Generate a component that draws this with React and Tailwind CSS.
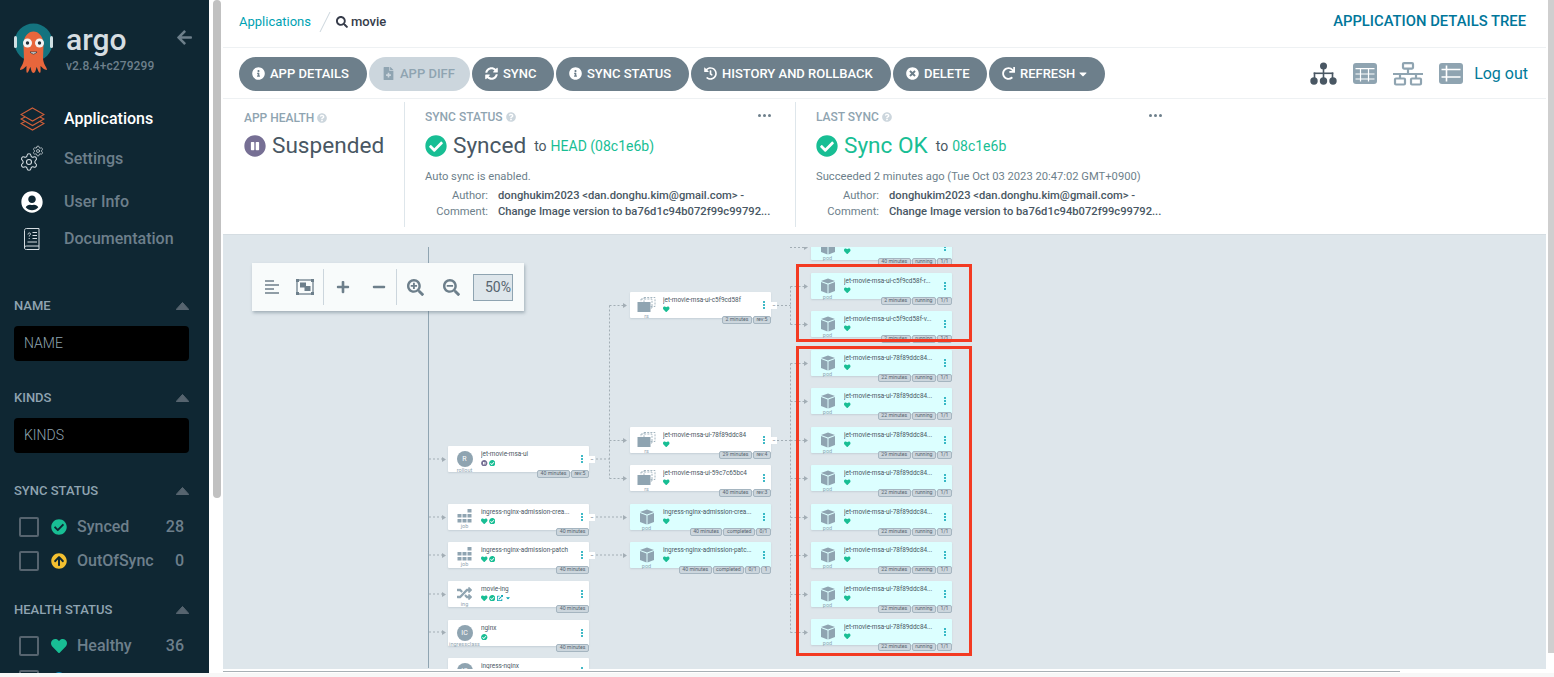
import {
  FaArrowCircleUp,
  FaArrowLeft,
  FaCaretDown,
  FaCheckCircle,
  FaExternalLinkAlt,
  FaFileMedical,
  FaHeart,
  FaHistory,
  FaInfoCircle,
  FaMinus,
  FaPauseCircle,
  FaPlus,
  FaQuestionCircle,
  FaRandom,
  FaRedo,
  FaSearch,
  FaSearchMinus,
  FaSearchPlus,
  FaSyncAlt,
  FaTimesCircle,
  FaUserCircle,
} from "react-icons/fa";
import { Settings } from "lucide-react";

const GREEN = "#18be94";

function ArgoLogo() {
  return (
    <svg width="40" height="52" viewBox="0 0 40 52">
      <circle cx="19.5" cy="19.5" r="19" fill="#14737f" />
      <rect x="0" y="13" width="3" height="12" rx="1.5" fill="#cfdfe3" />
      <rect x="36" y="13" width="3" height="12" rx="1.5" fill="#cfdfe3" />
      <path d="M9.5 22 C9.5 4 29.5 4 29.5 22 L29 36 C30 43 33 44 33 47 C30 47 28 44 26.5 43 C26.5 46 27 49 26 50 C24 49 23.5 45 22.5 44 C22 47 21 50 19.5 50 C18 50 17 47 16.5 44 C15.5 45 15 49 13 50 C12 49 12.5 46 12.5 43 C11 44 9 47 6 47 C6 44 9 43 10 36 Z" fill="#e8663c" />
      <circle cx="13.5" cy="20" r="4.5" fill="#f4f4f4" />
      <circle cx="25.5" cy="20" r="4.5" fill="#f4f4f4" />
      <circle cx="13.5" cy="20" r="1.7" fill="#22303a" />
      <circle cx="25.5" cy="20" r="1.7" fill="#22303a" />
      <path d="M16 29 Q19.5 33 23 29 Z" fill="#fff" stroke="#22303a" strokeWidth="0.7" />
    </svg>
  );
}

function LayersIcon() {
  return (
    <svg width="25" height="24" viewBox="0 0 25 24" fill="none" stroke="#d2603a" strokeWidth="1.1">
      <path d="M12.5 1 L24 7.5 L12.5 14 L1 7.5 Z" />
      <path d="M5 10 L1 12 L12.5 18.5 L24 12 L20 10" />
      <path d="M5 14.5 L1 16.5 L12.5 23 L24 16.5 L20 14.5" />
    </svg>
  );
}

function DocIcon() {
  return (
    <svg width="16" height="22" viewBox="0 0 16 22" fill="none" stroke="#d5dde2" strokeWidth="1">
      <path d="M2.5 0.5 H15 V18 H2.5 C1.2 18 0.5 18.8 0.5 20 V2.5 C0.5 1.3 1.2 0.5 2.5 0.5 Z" />
      <path d="M0.5 20 C0.5 21 1.2 21.5 2.5 21.5 H15 V18" />
      <path d="M4 6.5 C4 4.5 6.5 4.5 6.5 6 C6.5 7 5.2 7 5.2 8.5 M5.2 10 V11" />
      <path d="M8.5 4.5 H13 M8.5 7.5 H13 M8.5 10.5 H13 M3.5 14 H13" />
    </svg>
  );
}

function GearsIcon() {
  return (
    <span className="relative h-[24px] w-[24px]">
      <Settings size={20} strokeWidth={1.3} className="absolute bottom-[-1px] left-[-1px] text-[#d5dde2]" />
      <Settings size={12} strokeWidth={1.5} className="absolute right-[0px] top-[-2px] text-[#d5dde2]" />
    </span>
  );
}

function Caret() {
  return (
    <svg width="13" height="8" viewBox="0 0 13 8">
      <path d="M6.5 0.5 L12.8 7.5 H0.2 Z" fill="#56646f" stroke="#56646f" strokeLinejoin="round" />
    </svg>
  );
}

function CubeIcon({ size = 16 }) {
  return (
    <svg width={size} height={size} viewBox="0 0 16 16">
      <path d="M8 0.5 L15 3 L8 5.6 L1 3 Z" fill="#8fa4b1" />
      <path d="M1 4 L7.5 6.4 V15.5 L1 13 Z" fill="#8fa4b1" />
      <path d="M15 4 L8.5 6.4 V15.5 L15 13 Z" fill="#8fa4b1" />
    </svg>
  );
}

function RsIcon() {
  return (
    <svg width="19" height="16" viewBox="0 0 19 16">
      <rect x="7" y="0.5" width="11" height="9" fill="none" stroke="#8fa4b1" strokeWidth="0.8" strokeDasharray="2 1.2" />
      <rect x="4" y="2" width="11" height="9" fill="none" stroke="#8fa4b1" strokeWidth="0.8" strokeDasharray="2 1.2" />
      <rect x="0.5" y="5" width="13" height="10" fill="#8fa4b1" />
    </svg>
  );
}

function JobIcon() {
  return (
    <svg width="15" height="14" viewBox="0 0 15 14" fill="#8fa4b1">
      <rect x="10.5" y="0" width="4" height="3.5" />
      <rect x="0.5" y="5" width="4" height="3.5" />
      <rect x="5.5" y="5" width="4" height="3.5" />
      <rect x="10.5" y="5" width="4" height="3.5" />
      <rect x="0.5" y="10" width="4" height="3.5" />
      <rect x="5.5" y="10" width="4" height="3.5" />
      <rect x="10.5" y="10" width="4" height="3.5" />
    </svg>
  );
}

function NodeIcon({ kind, letter }) {
  if (kind === "pod") return <CubeIcon />;
  if (kind === "rs") return <RsIcon />;
  if (kind === "job") return <JobIcon />;
  if (kind === "ing") return <FaRandom className="text-[15px] text-[#8fa4b1]" />;
  return (
    <span className="flex h-4 w-4 items-center justify-center rounded-full bg-[#8fa4b1] text-[7px] text-white">
      {letter}
    </span>
  );
}

function StatusIcons({ status }) {
  return (
    <div className="flex h-[8px] items-center gap-[1px]">
      {status.includes("suspended") && <FaPauseCircle className="text-[6.5px] text-[#766f94]" />}
      {status.includes("heart") && <FaHeart className="text-[6.5px] text-[#18be94]" />}
      {status.includes("check") && <FaCheckCircle className="text-[6.5px] text-[#18be94]" />}
      {status.includes("link") && (
        <>
          <FaExternalLinkAlt className="ml-[1px] text-[6px] text-[#00a2b3]" />
          <FaCaretDown className="ml-[1px] text-[6px] text-[#00a2b3]" />
        </>
      )}
    </div>
  );
}

function Node({ x, y, kind, letter, name, status, tags, collapse, light }) {
  return (
    <div
      className={`absolute flex h-[26px] w-[141px] rounded-[1px] shadow-[0_1px_2px_rgba(100,120,135,0.2)] ${
        light ? "bg-[#dcffff]" : "bg-white"
      }`}
      style={{ left: x - 223, top: y - 247 }}
    >
      <div className="flex w-[33px] shrink-0 flex-col items-center pt-[5px]">
        <div className="flex h-[16px] items-center">
          <NodeIcon kind={kind} letter={letter} />
        </div>
        <span className="whitespace-nowrap text-[5.5px] leading-[7px] text-[#8fa4b1]">{kind === "ic" ? "ingressclass" : kind}</span>
      </div>
      <div className="w-[96px] pt-[4px]">
        <div className="truncate text-[6.4px] leading-[8px] text-[#495763]">{name}</div>
        <div className="mt-[1px]">
          <StatusIcons status={status} />
        </div>
      </div>
      <div className="flex flex-col gap-[1px] pl-[4px] pt-[9px]">
        <span className="h-[2px] w-[2px] rounded-full bg-[#00a2b3]" />
        <span className="h-[2px] w-[2px] rounded-full bg-[#00a2b3]" />
        <span className="h-[2px] w-[2px] rounded-full bg-[#00a2b3]" />
      </div>
      <div className="absolute right-[0px] top-[24px] flex gap-[1px]">
        {tags.map((t) => (
          <span
            key={t}
            className="flex h-[8px] items-center whitespace-nowrap rounded-[2px] border border-[#a5b5c0] bg-[#ccd6dd] px-[2.5px] text-[5.2px] text-[#56646f]"
          >
            {t}
          </span>
        ))}
      </div>
      {collapse && (
        <span className="absolute left-[141px] top-[10px] flex h-[7px] w-[6px] items-center justify-center bg-white text-[6px] leading-none text-[#56646f]">
          −
        </span>
      )}
    </div>
  );
}

const col3 = [
  { y: 234, name: "jet-movie-msa-ui-59c7c65bc4...", tags: ["40 minutes", "running", "1/1"] },
  { y: 273, name: "jet-movie-msa-ui-c5f9cd58f-r...", tags: ["2 minutes", "running", "1/1"] },
  { y: 311, name: "jet-movie-msa-ui-c5f9cd58f-v...", tags: ["2 minutes", "running", "1/1"] },
  { y: 350, name: "jet-movie-msa-ui-78f89ddc84...", tags: ["22 minutes", "running", "1/1"] },
  { y: 388, name: "jet-movie-msa-ui-78f89ddc84...", tags: ["22 minutes", "running", "1/1"] },
  { y: 427, name: "jet-movie-msa-ui-78f89ddc84...", tags: ["29 minutes", "running", "1/1"] },
  { y: 465, name: "jet-movie-msa-ui-78f89ddc84...", tags: ["22 minutes", "running", "1/1"] },
  { y: 504, name: "jet-movie-msa-ui-78f89ddc84...", tags: ["22 minutes", "running", "1/1"] },
  { y: 542, name: "jet-movie-msa-ui-78f89ddc84...", tags: ["22 minutes", "running", "1/1"] },
  { y: 581, name: "jet-movie-msa-ui-78f89ddc84...", tags: ["22 minutes", "running", "1/1"] },
  { y: 619, name: "jet-movie-msa-ui-78f89ddc84...", tags: ["22 minutes", "running", "1/1"] },
];

const nodes = [
  { x: 448, y: 446, kind: "rollout", letter: "R", name: "jet-movie-msa-ui", status: ["suspended", "check"], tags: ["40 minutes", "rev:5"], collapse: true },
  { x: 448, y: 504, kind: "job", name: "ingress-nginx-admission-crea...", status: ["heart", "check"], tags: ["40 minutes"], collapse: true },
  { x: 448, y: 542, kind: "job", name: "ingress-nginx-admission-patch", status: ["heart", "check"], tags: ["40 minutes"], collapse: true },
  { x: 448, y: 581, kind: "ing", name: "movie-ing", status: ["heart", "check", "link"], tags: ["40 minutes"] },
  { x: 448, y: 620, kind: "ic", letter: "IC", name: "nginx", status: ["check"], tags: ["40 minutes"] },
  { x: 448, y: 658, kind: "ic", letter: "IC", name: "ingress-nginx", status: ["check"], tags: ["40 minutes"] },
  { x: 630, y: 292, kind: "rs", name: "jet-movie-msa-ui-c5f9cd58f", status: ["heart"], tags: ["2 minutes", "rev:5"], collapse: true },
  { x: 630, y: 427, kind: "rs", name: "jet-movie-msa-ui-78f89ddc84", status: ["heart"], tags: ["29 minutes", "rev:4"], collapse: true },
  { x: 630, y: 465, kind: "rs", name: "jet-movie-msa-ui-59c7c65bc4", status: ["heart"], tags: ["40 minutes", "rev:3"] },
  { x: 630, y: 504, kind: "pod", light: true, name: "ingress-nginx-admission-crea...", status: ["heart"], tags: ["40 minutes", "completed", "0/1"] },
  { x: 630, y: 542, kind: "pod", light: true, name: "ingress-nginx-admission-patc...", status: ["heart"], tags: ["40 minutes", "completed", "0/1", "1"] },
  ...col3.map((n) => ({ ...n, x: 811, kind: "pod", light: true, status: ["heart"] })),
];

// end of each dashed edge, in page coordinates
const arrows = [
  [446, 459], [446, 517], [446, 555], [446, 594], [446, 632],
  [627, 305], [627, 440], [627, 478], [627, 517], [627, 555],
  [808, 247], [808, 286], [808, 324], [808, 363], [808, 401], [808, 440],
  [808, 478], [808, 517], [808, 555], [808, 594], [808, 632],
];

function Edges() {
  return (
    <svg className="absolute left-0 top-0" width="1323" height="421" viewBox="223 247 1323 421" fill="none">
      <path d="M428.5 247 V668" stroke="#8fa4b1" strokeWidth="1" />
      <g stroke="#a3aeb5" strokeWidth="1" strokeDasharray="2 2">
        <path d="M429 459 H442 M429 517 H442 M429 555 H442 M429 594 H442 M429 632 H442" />
        <path d="M596 459 H609.5 M609.5 305.5 V478.5 M609.5 305.5 H623 M609.5 440.5 H623 M609.5 478.5 H623" />
        <path d="M596 517 H623 M596 555 H623" />
        <path d="M777 305.5 H790.5 M790.5 286.5 V324.5 M790.5 286.5 H804 M790.5 324.5 H804" />
        <path d="M777 440.5 H790.5 M790.5 363.5 V632.5 M790.5 363.5 H804 M790.5 401.5 H804 M790.5 440.5 H804 M790.5 478.5 H804 M790.5 517.5 H804 M790.5 555.5 H804 M790.5 594.5 H804 M790.5 632.5 H804" />
        <path d="M790 247.5 H804" />
      </g>
      {arrows.map(([x, y]) => (
        <path key={`${x}-${y}`} d={`M${x - 4} ${y - 2} L${x} ${y + 0.5} L${x - 4} ${y + 3} Z`} fill="#a3aeb5" />
      ))}
    </svg>
  );
}

function NavItem({ icon, label, active, className }) {
  return (
    <div className={`flex items-center ${className}`}>
      <span className="flex w-[64px] justify-center">{icon}</span>
      <span className={`text-[16px] font-medium ${active ? "text-white" : "text-[#6d7f8b]"}`}>{label}</span>
    </div>
  );
}

function FilterTitle({ label, className }) {
  return (
    <div className={`flex h-[16px] items-center justify-between pl-[14px] pr-[20px] ${className}`}>
      <span className="text-[13px] font-medium text-[#8fa4b1]">{label}</span>
      <Caret />
    </div>
  );
}

function FilterInput({ placeholder }) {
  return (
    <div className="mx-[14px] mt-[12px] flex h-[35px] w-[175px] items-center rounded-[4px] bg-black pl-[10px] text-[14px] font-light text-[#8fa4b1]">
      {placeholder}
    </div>
  );
}

function FilterRow({ icon, label, count, className }) {
  return (
    <div className={`flex h-[20px] items-center pl-[19px] pr-[25px] ${className}`}>
      <span className="h-[20px] w-[20px] rounded-[2px] border-2 border-[#56646f]" />
      <span className="ml-[12px] flex w-[16px] justify-center text-[16px]">{icon}</span>
      <span className="ml-[10px] flex-1 text-[16px] font-medium text-[#6d7f8b]">{label}</span>
      <span className="text-[16px] font-medium text-[#6d7f8b]">{count}</span>
    </div>
  );
}

function Sidebar() {
  return (
    <aside className="h-full w-[209px] shrink-0 overflow-hidden bg-[#0f2733]">
      <div className="flex h-[98px] pl-[14px] pt-[23px]">
        <ArgoLogo />
        <div className="ml-[12px] flex-1 pt-[2px]">
          <div className="text-[30px] font-medium leading-[30px] text-[#d6dde1]">argo</div>
          <div className="mt-[4px] text-[12px] font-medium leading-[14px] tracking-[0.1px] text-[#6d7f8b]">v2.8.4+c279299</div>
        </div>
        <FaArrowLeft className="mr-[16px] mt-[6px] text-[17px] text-[#6d7f8b]" />
      </div>
      <NavItem className="mt-[9px] h-[24px]" active icon={<LayersIcon />} label="Applications" />
      <NavItem className="mt-[16px] h-[24px]" icon={<GearsIcon />} label="Settings" />
      <NavItem className="mt-[19px] h-[24px]" icon={<FaUserCircle className="text-[22px] text-white" />} label="User Info" />
      <NavItem className="mt-[13px] h-[24px]" icon={<DocIcon />} label="Documentation" />
      <FilterTitle className="mt-[47px]" label="NAME" />
      <FilterInput placeholder="NAME" />
      <FilterTitle className="mt-[29px]" label="KINDS" />
      <FilterInput placeholder="KINDS" />
      <FilterTitle className="mt-[30px]" label="SYNC STATUS" />
      <FilterRow className="mt-[18px]" icon={<FaCheckCircle className="text-[#18be94]" />} label="Synced" count="28" />
      <FilterRow className="mt-[14px]" icon={<FaArrowCircleUp className="text-[#f4c030]" />} label="OutOfSync" count="0" />
      <FilterTitle className="mt-[31px]" label="HEALTH STATUS" />
      <FilterRow className="mt-[18px]" icon={<FaHeart className="text-[#18be94]" />} label="Healthy" count="36" />
      {/* next row: only the top edge of it is in view */}
      <FilterRow className="mt-[14px]" icon={<FaPauseCircle className="text-[#0dadea]" />} />
    </aside>
  );
}

function ActionButton({ icon, label, disabled, trailing, width }) {
  return (
    <button
      className={`flex h-[34px] items-center gap-[5px] whitespace-nowrap rounded-full pl-[13px] text-[13px] font-medium ${
        disabled ? "bg-[#ccd6dd] text-[#8fa4b1]" : "bg-[#6d7f8b] text-white"
      }`}
      style={{ width }}
    >
      <span className="w-[13px] text-[13px]">{icon}</span>
      {label}
      {trailing}
    </button>
  );
}

function TreeIcon() {
  return (
    <svg width="27" height="23" viewBox="0 0 27 23" fill="#495763">
      <circle cx="13.5" cy="4" r="3.5" />
      <rect x="12.7" y="6" width="1.6" height="10" />
      <rect x="3.7" y="10.5" width="19.6" height="1.6" />
      <rect x="3.7" y="10.5" width="1.6" height="6" />
      <rect x="21.7" y="10.5" width="1.6" height="6" />
      <circle cx="4" cy="19" r="3.7" />
      <circle cx="13.5" cy="19" r="3.7" />
      <circle cx="23" cy="19" r="3.7" />
    </svg>
  );
}

function GridIcon() {
  return (
    <svg width="24" height="21" viewBox="0 0 24 21">
      <rect width="24" height="21" rx="3" fill="#8fa4b1" />
      <path d="M2.5 5.7 H21.5 M2.5 11 H21.5 M2.5 16 H21.5 M7.5 5.7 V18.5 M15.5 5.7 V18.5" stroke="#fff" strokeWidth="1.2" />
    </svg>
  );
}

function NetworkIcon() {
  return (
    <svg width="30" height="24" viewBox="0 0 30 24" fill="none" stroke="#8fa4b1" strokeWidth="2.2">
      <rect x="10" y="1.1" width="10" height="5.5" rx="1" />
      <path d="M15 7 V12 M0 12 H30 M7 12 V16 M23 12 V16" />
      <rect x="2" y="16.5" width="10" height="6" rx="1" />
      <rect x="18" y="16.5" width="10" height="6" rx="1" />
    </svg>
  );
}

function ListIcon() {
  return (
    <svg width="24" height="21" viewBox="0 0 24 21">
      <rect width="24" height="21" rx="3" fill="#8fa4b1" />
      <path d="M2.5 6.5 H21.5 M2.5 14 H21.5 M7.5 2.5 V18.5" stroke="#fff" strokeWidth="1.6" />
    </svg>
  );
}

function FitIcon() {
  return (
    <svg width="18" height="16" viewBox="0 0 18 16" fill="#6d7f8b">
      <rect x="1" y="1" width="16" height="14" fill="none" stroke="#6d7f8b" strokeWidth="1.3" />
      <rect x="0" y="0" width="3" height="3" />
      <rect x="15" y="0" width="3" height="3" />
      <rect x="0" y="13" width="3" height="3" />
      <rect x="15" y="13" width="3" height="3" />
      <rect x="4" y="3.5" width="6" height="5" />
      <rect x="8.5" y="7" width="6" height="5" />
    </svg>
  );
}

function AlignIcon() {
  return (
    <svg width="14" height="14" viewBox="0 0 14 14" stroke="#6d7f8b" strokeWidth="1.5">
      <path d="M0 1 H9 M0 5 H14 M0 9 H9 M0 13 H14" />
    </svg>
  );
}

function ZoomBar() {
  return (
    <div className="absolute left-[29px] top-[28px] z-10 flex h-[48px] w-[272px] items-center bg-[#f8fbfb] text-[#6d7f8b] shadow-[1px_2px_3px_rgba(90,110,125,0.45)]">
      <div className="flex w-[71px] items-center pl-[13px]">
        <AlignIcon />
        <span className="ml-[17px]">
          <FitIcon />
        </span>
      </div>
      <div className="flex h-[36px] w-[73px] items-center border-l border-[#ccd6dd] pl-[12px]">
        <FaPlus className="text-[14px]" />
        <FaMinus className="ml-[22px] text-[14px]" />
      </div>
      <div className="flex h-[36px] items-center border-l border-[#ccd6dd] pl-[10px]">
        <FaSearchPlus className="text-[17px]" />
        <FaSearchMinus className="ml-[19px] text-[17px]" />
      </div>
      <div className="ml-[13px] flex h-[27px] w-[40px] items-center justify-end border border-[#8fa4b1] bg-[#dee6eb] pr-[1px] text-[14px] text-[#56646f]">
        50%
      </div>
    </div>
  );
}

function Hint() {
  return <FaQuestionCircle className="ml-[3px] text-[10px] text-[#ccd6dd]" />;
}

function MetaRow({ label, value }) {
  return (
    <div className="flex h-[16px] items-center text-[11.2px]">
      <span className="w-[63px] text-right text-[#6d7f8b]">{label}</span>
      <span className="ml-[10px] whitespace-nowrap font-medium text-[#495763]">{value}</span>
    </div>
  );
}

function Dots() {
  return (
    <span className="absolute right-0 top-[5px] flex gap-[2px]">
      <i className="h-[3px] w-[3px] rounded-full bg-[#6d7f8b]" />
      <i className="h-[3px] w-[3px] rounded-full bg-[#6d7f8b]" />
      <i className="h-[3px] w-[3px] rounded-full bg-[#6d7f8b]" />
    </span>
  );
}

function Summary() {
  const author = "donghukim2023 <dan.donghu.kim@gmail.com> -";
  const comment = "Change Image version to ba76d1c94b072f99c99792...";
  return (
    <div className="flex h-[136px] border-b border-[#d5dde2] bg-white pt-[3px]">
      <div className="h-[125px] w-[182px] shrink-0 border-r border-[#dee6eb] pl-[21px] pt-[8px]">
        <div className="flex h-[16px] items-center text-[12px] font-medium text-[#8fa4b1]">APP HEALTH<Hint /></div>
        <div className="mt-[6px] flex h-[28px] items-center">
          <FaPauseCircle className="text-[22px] text-[#766f94]" />
          <span className="ml-[6px] text-[22.6px] text-[#495763]">Suspended</span>
        </div>
      </div>
      <div className="relative h-[125px] w-[391px] shrink-0 border-r border-[#dee6eb] pl-[20px] pt-[7px]">
        <div className="relative mr-[24px]">
          <div className="flex h-[16px] items-center text-[12px] font-medium text-[#8fa4b1]">SYNC STATUS<Hint /></div>
          <Dots />
        </div>
        <div className="mt-[6px] flex h-[30px] items-center">
          <FaCheckCircle className="text-[22px]" style={{ color: GREEN }} />
          <span className="ml-[6px] text-[22.6px] text-[#495763]">Synced</span>
          <span className="ml-[8px] text-[14px] text-[#495763]">to</span>
          <span className="ml-[4px] text-[14px] text-[#18be94]">HEAD (08c1e6b)</span>
        </div>
        <div className="mt-[8px] h-[16px] text-[11.2px] leading-[16px] text-[#6d7f8b]">Auto sync is enabled.</div>
        <div className="mt-[3px]">
          <MetaRow label="Author:" value={author} />
          <MetaRow label="Comment:" value={comment} />
        </div>
      </div>
      <div className="relative h-[125px] w-[366px] shrink-0 pl-[20px] pt-[7px]">
        <div className="relative">
          <div className="flex h-[16px] items-center text-[12px] font-medium text-[#8fa4b1]">LAST SYNC<Hint /></div>
          <Dots />
        </div>
        <div className="mt-[6px] flex h-[30px] items-center">
          <FaCheckCircle className="text-[22px]" style={{ color: GREEN }} />
          <span className="ml-[6px] text-[22.6px] text-[#18be94]">Sync OK</span>
          <span className="ml-[8px] text-[14px] text-[#495763]">to</span>
          <span className="ml-[4px] text-[14px] text-[#18be94]">08c1e6b</span>
        </div>
        <div className="mt-[8px] h-[16px] whitespace-nowrap text-[11.2px] leading-[16px] text-[#6d7f8b]">Succeeded 2 minutes ago (Tue Oct 03 2023 20:47:02 GMT+0900)</div>
        <div className="mt-[3px]">
          <MetaRow label="Author:" value={author} />
          <MetaRow label="Comment:" value={comment} />
        </div>
      </div>
    </div>
  );
}

function Main() {
  return (
    <main className="flex h-full min-w-0 flex-1 flex-col bg-white">
      <div className="flex h-[48px] shrink-0 items-center justify-between border-b border-[#eef1f3] pb-[4px] pl-[16px] pr-[20px]">
        <div className="flex items-center text-[13px]">
          <span className="text-[#00a2b3]">Applications</span>
          <svg className="ml-[8px]" width="12" height="22" viewBox="0 0 12 22">
            <path d="M1 21 L11 1" stroke="#ccd6dd" />
          </svg>
          <FaSearch className="ml-[5px] text-[12px] text-[#363c4a]" />
          <span className="ml-[3px] font-medium text-[#363c4a]">movie</span>
        </div>
        <span className="text-[14.8px] font-medium text-[#00769a]">APPLICATION DETAILS TREE</span>
      </div>
      <div className="flex h-[51px] shrink-0 items-center border-b border-[#eef1f3] pl-[16px] pr-[18px] pt-[1px]">
        <div className="flex flex-1 gap-[2px]">
          <ActionButton width={128} icon={<FaInfoCircle />} label="APP DETAILS" />
          <ActionButton width={101} disabled icon={<FaFileMedical />} label="APP DIFF" />
          <ActionButton width={82} icon={<FaSyncAlt />} label="SYNC" />
          <ActionButton width={133} icon={<FaInfoCircle />} label="SYNC STATUS" />
          <ActionButton width={200} icon={<FaHistory />} label="HISTORY AND ROLLBACK" />
          <ActionButton width={94} icon={<FaTimesCircle />} label="DELETE" />
          <ActionButton width={116} icon={<FaRedo />} label="REFRESH" trailing={<FaCaretDown className="-ml-[3px] text-[12px]" />} />
        </div>
        <div className="flex items-center">
          <TreeIcon />
          <span className="ml-[16px]"><GridIcon /></span>
          <span className="ml-[16px]"><NetworkIcon /></span>
          <span className="ml-[16px]"><ListIcon /></span>
          <span className="ml-[11px] text-[16px] text-[#007a99]">Log out</span>
        </div>
      </div>
      <Summary />
      <div className="relative min-h-0 flex-1 bg-[#dee6eb] pt-[12px]">
        <ZoomBar />
        <div className="relative h-full overflow-hidden">
          <Edges />
          {nodes.map((n) => (
            <Node key={`${n.x}-${n.y}`} {...n} />
          ))}
          <div className="absolute left-[573px] top-[17px] h-[78px] w-[176px] border-[3px] border-[#f33a22]" />
          <div className="absolute left-[573px] top-[99px] h-[310px] w-[176px] border-[3px] border-[#f33a22]" />
        </div>
      </div>
      <div className="h-[4px] shrink-0 bg-white">
        <div className="mt-[2px] h-[1px] w-[1177px] bg-[#a8b0b5]" />
      </div>
    </main>
  );
}

export default function App() {
  return (
    <div className="h-[677px] w-[1554px] overflow-hidden bg-[#f7f7f7] [font-family:Roboto,sans-serif]">
      <div className="flex h-[673px]">
        <Sidebar />
        <div className="w-[14px] shrink-0 bg-white pl-[4px]">
          <div className="h-[498px] w-[8px] rounded-full bg-[#c1c1c1]" />
        </div>
        <Main />
        <div className="w-[8px] shrink-0 bg-white pl-[2px]">
          <div className="h-[653px] w-[6px] bg-[#cfcfcf]" />
        </div>
      </div>
    </div>
  );
}
